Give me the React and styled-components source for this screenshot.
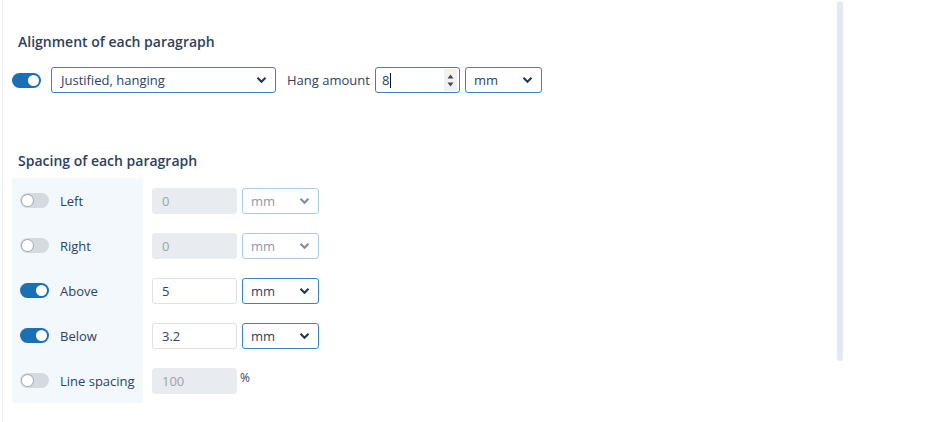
import { Fragment } from "react";
import styled, { createGlobalStyle } from "styled-components";

const Global = createGlobalStyle`
  body {
    margin: 0;
    background: #fff;
    font-family: "Open Sans", "Noto Sans", sans-serif;
    color: #2d4263;
  }
`;

const Page = styled.div`
  display: flex;
  align-items: flex-start;
  width: 945px;
  height: 422px;
  overflow: hidden;
`;

const Content = styled.div`
  width: 834px;
  height: 422px;
  margin-left: 2px;
  border-left: 1px solid #eceff3;
  padding-top: 32px;
  box-sizing: border-box;
`;

const ScrollThumb = styled.div`
  width: 6px;
  height: 360px;
  margin: 1px 0 0 1px;
  border-radius: 3px;
  background: #e2e9f3;
`;

const Title = styled.h3`
  margin: 0 0 0 15px;
  font-size: 14px;
  line-height: 20px;
  font-weight: 600;
  color: #2b3f5e;
`;

const AlignRow = styled.div`
  display: flex;
  align-items: center;
  height: 26px;
  margin: 15px 0 58px 9px;
`;

const Track = styled.span`
  position: relative;
  display: inline-block;
  flex: none;
  width: 29px;
  height: 15px;
  border-radius: 8px;
  background: ${(p) => (p.$on ? "#1b6fb3" : "#d5dae1")};
  &::after {
    content: "";
    position: absolute;
    top: 2px;
    left: ${(p) => (p.$on ? "16px" : "2px")};
    width: 11px;
    height: 11px;
    border-radius: 50%;
    background: #fff;
    box-shadow: ${(p) => (p.$on ? "none" : "0 0 0 1px #a4adb9")};
  }
`;

const Select = styled.div`
  display: flex;
  align-items: center;
  justify-content: space-between;
  box-sizing: border-box;
  width: ${(p) => p.$w}px;
  height: 26px;
  padding: 0 8px 0 ${(p) => p.$pl || 8}px;
  border: 1px solid ${(p) => (p.$off ? "#a9cbe9" : "#3a80c2")};
  border-radius: 3px;
  background: #fff;
  font-size: 13px;
  color: ${(p) => (p.$off ? "#8d99ad" : "#2d4263")};
  svg {
    color: ${(p) => (p.$off ? "#7d8ca6" : "#22385a")};
  }
`;

const Label = styled.span`
  font-size: 13px;
  color: #2d4263;
  margin: 0 ${(p) => p.$mr || 0}px 0 ${(p) => p.$ml || 0}px;
`;

const NumberBox = styled.div`
  display: flex;
  align-items: center;
  box-sizing: border-box;
  width: 85px;
  height: 26px;
  margin-right: 5px;
  padding-left: 6px;
  border: 1px solid #3a80c2;
  border-radius: 3px;
  font-size: 13px;
  color: #2d4263;
`;

const Caret = styled.span`
  width: 1px;
  height: 15px;
  background: #111;
  margin-left: 1px;
`;

const Spinner = styled.div`
  margin-left: auto;
  margin-right: 2px;
  width: 13px;
  height: 22px;
  background: #f1f1f1;
  display: flex;
  flex-direction: column;
  align-items: center;
  justify-content: center;
  gap: 3px;
`;

const SpacingGrid = styled.div`
  display: grid;
  grid-template-columns: 140px 90px 77px;
  grid-auto-rows: 45px;
  margin: 7px 0 0 9px;
  align-items: center;
`;

const ToggleCell = styled.div`
  display: flex;
  align-items: center;
  gap: 11px;
  width: 131px;
  height: 100%;
  box-sizing: border-box;
  padding-left: 8px;
  background: #f3f8fd;
`;

const Field = styled.div`
  box-sizing: border-box;
  width: 85px;
  height: 26px;
  display: flex;
  align-items: center;
  padding-left: 9px;
  border-radius: 3px;
  font-size: 13px;
  border: 1px solid ${(p) => (p.$off ? "#e8ebef" : "#dde2e8")};
  background: ${(p) => (p.$off ? "#e8ebef" : "#fff")};
  color: ${(p) => (p.$off ? "#9aa3b0" : "#2d4263")};
`;

const Percent = styled.span`
  align-self: start;
  margin-top: 11px;
  margin-left: -2px;
  font-size: 12px;
  color: #2d4263;
`;

function Chevron() {
  return (
    <svg width="11" height="8" viewBox="0 0 11 8">
      <path d="M1.5 1.8 L5.5 5.8 L9.5 1.8" fill="none" stroke="currentColor" strokeWidth="2.1" />
    </svg>
  );
}

function Tri({ up }) {
  return (
    <svg width="7" height="5" viewBox="0 0 7 5">
      <path d={up ? "M0.5 4.5 L3.5 0.5 L6.5 4.5 Z" : "M0.5 0.5 L3.5 4.5 L6.5 0.5 Z"} fill="#4a4a4a" />
    </svg>
  );
}

const rows = [
  { label: "Left", on: false, value: "0", unit: "mm" },
  { label: "Right", on: false, value: "0", unit: "mm" },
  { label: "Above", on: true, value: "5", unit: "mm" },
  { label: "Below", on: true, value: "3.2", unit: "mm" },
  { label: "Line spacing", on: false, value: "100", unit: null },
];

export default function App() {
  return (
    <Page>
      <Global />
      <Content>
        <Title>Alignment of each paragraph</Title>
        <AlignRow>
          <Track $on />
          <Label $ml={10} />
          <Select $w={225} $pl={9}>
            Justified, hanging
            <Chevron />
          </Select>
          <Label $ml={11} $mr={5}>Hang amount</Label>
          <NumberBox>
            8
            <Caret />
            <Spinner>
              <Tri up />
              <Tri />
            </Spinner>
          </NumberBox>
          <Select $w={77}>
            mm
            <Chevron />
          </Select>
        </AlignRow>

        <Title>Spacing of each paragraph</Title>
        <SpacingGrid>
          {rows.map((r) => (
            <Fragment key={r.label}>
              <ToggleCell>
                <Track $on={r.on} />
                <Label>{r.label}</Label>
              </ToggleCell>
              <Field $off={!r.on}>{r.value}</Field>
              {r.unit ? (
                <Select $w={77} $off={!r.on}>
                  {r.unit}
                  <Chevron />
                </Select>
              ) : (
                <Percent>%</Percent>
              )}
            </Fragment>
          ))}
        </SpacingGrid>
      </Content>
      <ScrollThumb />
    </Page>
  );
}
